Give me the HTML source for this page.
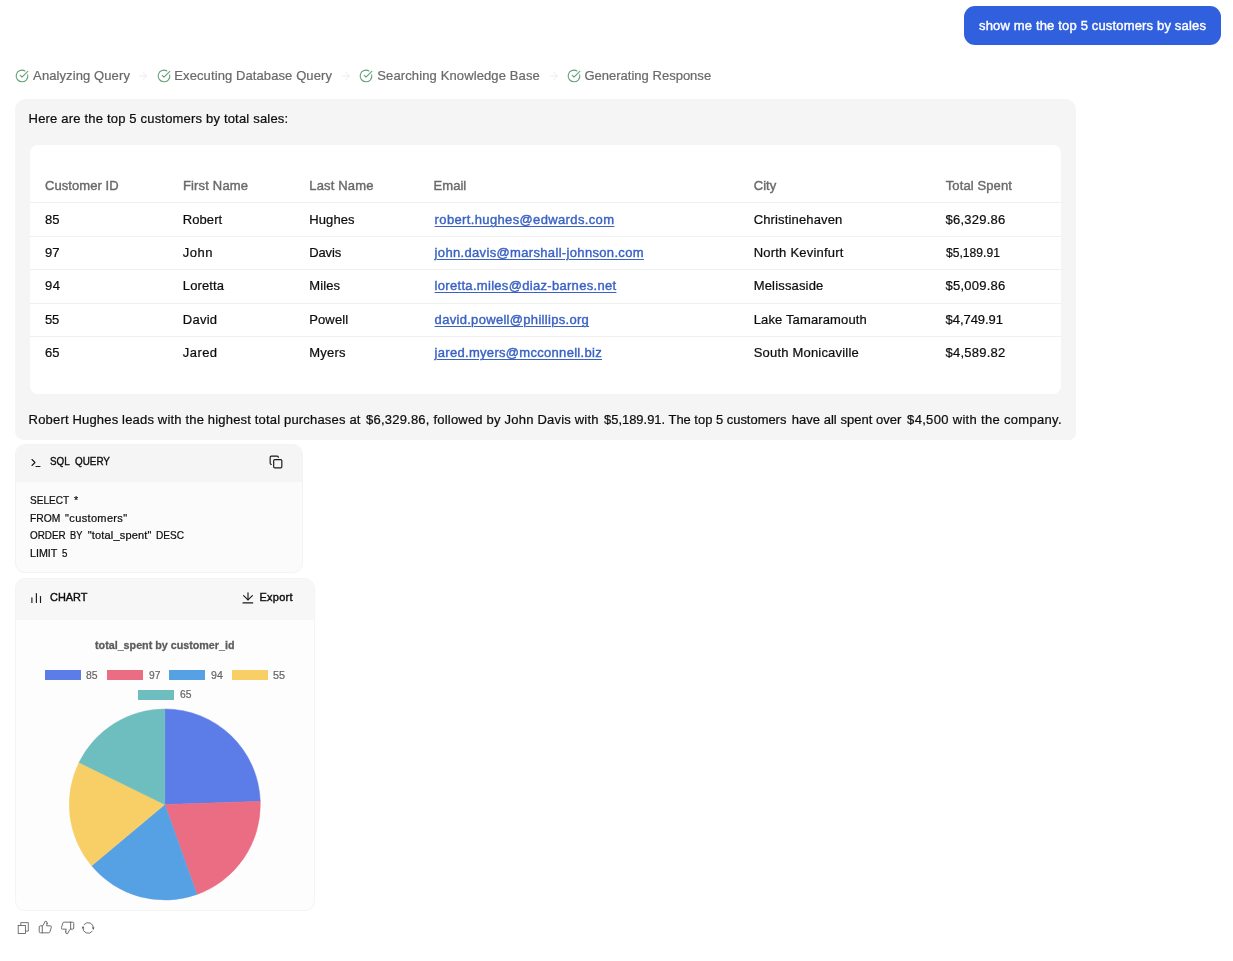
<!DOCTYPE html>
<html lang="en"><head><meta charset="utf-8"><title>Chat</title>
<style>
html,body{margin:0;padding:0;background:#fff;}
body{width:1233px;height:961px;overflow:hidden;font-family:"Liberation Sans",sans-serif;}
#page{position:relative;width:1233px;height:961px;overflow:hidden;background:#fff;}
.t{position:absolute;white-space:nowrap;margin:0;padding:0;}
.b{position:absolute;box-sizing:border-box;}
svg{position:absolute;overflow:visible;}
.ln{position:absolute;left:30px;width:1031px;height:1px;background:#f0f0f0;}
.lg{position:absolute;width:36px;height:10.4px;}
#txt{position:absolute;left:0;top:0;width:1233px;height:961px;will-change:transform;}

</style></head><body>
<div id="page">

<div class="b" style="left:964px;top:6px;width:257px;height:39px;background:#3060dd;border-radius:11px;"></div>
<svg style="left:15px;top:69.4px" width="14" height="14" viewBox="0 0 24 24" fill="none" stroke="#62a077" stroke-width="1.85" stroke-linecap="round" stroke-linejoin="round"><path d="M21.801 10A10 10 0 1 1 17 3.335"/><path d="m9 11 3 3L22 4"/></svg><svg style="left:137px;top:70.4px" width="12" height="12" viewBox="0 0 24 24" fill="none" stroke="#ededed" stroke-width="2" stroke-linecap="round" stroke-linejoin="round"><path d="M5 12h14"/><path d="m12 5 7 7-7 7"/></svg><svg style="left:157.3px;top:69.4px" width="14" height="14" viewBox="0 0 24 24" fill="none" stroke="#62a077" stroke-width="1.85" stroke-linecap="round" stroke-linejoin="round"><path d="M21.801 10A10 10 0 1 1 17 3.335"/><path d="m9 11 3 3L22 4"/></svg><svg style="left:339.5px;top:70.4px" width="12" height="12" viewBox="0 0 24 24" fill="none" stroke="#ededed" stroke-width="2" stroke-linecap="round" stroke-linejoin="round"><path d="M5 12h14"/><path d="m12 5 7 7-7 7"/></svg><svg style="left:358.9px;top:69.4px" width="14" height="14" viewBox="0 0 24 24" fill="none" stroke="#62a077" stroke-width="1.85" stroke-linecap="round" stroke-linejoin="round"><path d="M21.801 10A10 10 0 1 1 17 3.335"/><path d="m9 11 3 3L22 4"/></svg><svg style="left:547.7px;top:70.4px" width="12" height="12" viewBox="0 0 24 24" fill="none" stroke="#ededed" stroke-width="2" stroke-linecap="round" stroke-linejoin="round"><path d="M5 12h14"/><path d="m12 5 7 7-7 7"/></svg><svg style="left:566.6px;top:69.4px" width="14" height="14" viewBox="0 0 24 24" fill="none" stroke="#62a077" stroke-width="1.85" stroke-linecap="round" stroke-linejoin="round"><path d="M21.801 10A10 10 0 1 1 17 3.335"/><path d="m9 11 3 3L22 4"/></svg>
<div class="b" style="left:15px;top:99px;width:1061px;height:341px;background:#f5f5f5;border-radius:11px 11px 7px 9px;"></div>
<div class="b" style="left:30px;top:145px;width:1031px;height:249px;background:#ffffff;border-radius:8px;"></div>
<div class="ln" style="top:202px"></div>
<div class="ln" style="top:236px"></div>
<div class="ln" style="top:269px"></div>
<div class="ln" style="top:303px"></div>
<div class="ln" style="top:336px"></div>

<div class="b" style="left:15px;top:444px;width:288px;height:129px;background:#fbfbfb;border-radius:10px;border:1px solid #f3f3f3;overflow:hidden;"><div style="height:36.5px;background:#f5f5f5;"></div></div>
<svg style="left:30.2px;top:457px" width="12" height="12" viewBox="0 0 24 24" fill="none" stroke="#1a1a1a" stroke-width="2.2" stroke-linecap="round" stroke-linejoin="round"><path d="m4 17 6-6-6-6"/><path d="M12 19h8"/></svg>
<svg style="left:269px;top:455px" width="14" height="14" viewBox="0 0 24 24" fill="none" stroke="#1a1a1a" stroke-width="2" stroke-linecap="round" stroke-linejoin="round"><rect x="8" y="8" width="14" height="14" rx="2" ry="2"/><path d="M4 16c-1.1 0-2-.9-2-2V4c0-1.100.9-2 2-2h10c1.100 0 2 .9 2 2"/></svg>

<div class="b" style="left:15px;top:578px;width:300px;height:333px;background:#fdfdfd;border-radius:10px;border:1px solid #f4f4f4;overflow:hidden;"><div style="height:40.5px;background:#f7f7f7;"></div></div>

<div class="lg" style="left:44.6px;top:670px;background:#5c7ce8"></div>
<div class="lg" style="left:107.1px;top:670px;background:#eb6d83"></div>
<div class="lg" style="left:169.4px;top:670px;background:#56a0e4"></div>
<div class="lg" style="left:231.9px;top:670px;background:#f7cf66"></div>
<div class="lg" style="left:138.2px;top:689.7px;background:#6ebec0"></div>
<svg style="left:0;top:0" width="1233" height="961" viewBox="0 0 1233 961">
<path d="M164.8 804.5 L164.80 709.00 A95.5 95.5 0 0 1 260.25 801.31 Z" fill="#5c7ce8" stroke="#5c7ce8" stroke-width="0.5" stroke-linejoin="round"/>
<path d="M164.8 804.5 L260.25 801.31 A95.5 95.5 0 0 1 196.98 894.42 Z" fill="#eb6d83" stroke="#eb6d83" stroke-width="0.5" stroke-linejoin="round"/>
<path d="M164.8 804.5 L196.98 894.42 A95.5 95.5 0 0 1 91.61 865.85 Z" fill="#56a0e4" stroke="#56a0e4" stroke-width="0.5" stroke-linejoin="round"/>
<path d="M164.8 804.5 L91.61 865.85 A95.5 95.5 0 0 1 79.06 762.44 Z" fill="#f7cf66" stroke="#f7cf66" stroke-width="0.5" stroke-linejoin="round"/>
<path d="M164.8 804.5 L79.06 762.44 A95.5 95.5 0 0 1 164.80 709.00 Z" fill="#6ebec0" stroke="#6ebec0" stroke-width="0.5" stroke-linejoin="round"/>
<g fill="none" stroke="#1a1a1a" stroke-width="1.15" stroke-linecap="round" stroke-linejoin="round">
<path d="M31.900 597.900V602.400"/><path d="M36.400 593.500V602.400"/><path d="M40.500 596.500V602.400"/>
<path d="M248 592.800V599.700"/><path d="M243.600 595.700L248 599.900L252.400 595.700"/><path d="M243 602.900H252.700"/>
</g>
<g fill="none" stroke="#5f5f5f" stroke-width="0.85" stroke-linejoin="miter">
<rect x="18.200" y="925.500" width="7.200" height="8"/>
<path d="M20.800 925.300V922.600H28.300V931.100H25.600"/>
</g>
<path d="M84.09 924.54 A5.3 5.3 0 0 1 93.43 928.41" fill="none" stroke="#5f5f5f" stroke-width="0.9" stroke-linecap="round"/>
<path d="M93.28 930.11 L94.60 927.61 L91.91 927.38 Z" fill="#5f5f5f" stroke="none"/>
<path d="M92.21 931.36 A5.3 5.3 0 0 1 82.87 927.49" fill="none" stroke="#5f5f5f" stroke-width="0.9" stroke-linecap="round"/>
<path d="M83.02 925.79 L81.70 928.29 L84.39 928.52 Z" fill="#5f5f5f" stroke="none"/>
</svg>

<svg style="left:38.2px;top:920px" width="14.700" height="14" preserveAspectRatio="none" viewBox="0 0 24 24" fill="none" stroke="#5f5f5f" stroke-width="1.500" stroke-linecap="round" stroke-linejoin="round"><path d="M7 10v12"/><path d="M15 5.880 14 10h5.830a2 2 0 0 1 1.920 2.560l-2.330 8A2 2 0 0 1 17.500 22H4a2 2 0 0 1-2-2v-8a2 2 0 0 1 2-2h2.760a2 2 0 0 0 1.790-1.110L12 2a3.130 3.130 0 0 1 3 3.880Z"/></svg>
<svg style="left:59.700px;top:921.400px" width="15" height="14" preserveAspectRatio="none" viewBox="0 0 24 24" fill="none" stroke="#5f5f5f" stroke-width="1.500" stroke-linecap="round" stroke-linejoin="round"><path d="M17 14V2"/><path d="M9 18.120 10 14H4.170a2 2 0 0 1-1.920-2.560l2.330-8A2 2 0 0 1 6.500 2H20a2 2 0 0 1 2 2v8a2 2 0 0 1-2 2h-2.760a2 2 0 0 0-1.790 1.110L12 22a3.130 3.130 0 0 1-3-3.880Z"/></svg>

<div id="txt">
<div class="t" id="t0" style="left:979.00px;top:15.00px;font-size:13px;line-height:21px;font-weight:500;color:#ffffff;letter-spacing:0.165px;-webkit-text-stroke:0.4px currentColor;">show me the top 5 customers by sales</div>
<div class="t" id="t1" style="left:33.11px;top:65.00px;font-size:13px;line-height:21px;font-weight:400;color:#6a6a6a;letter-spacing:0.099px;-webkit-text-stroke:0.22px currentColor;">Analyzing Query</div>
<div class="t" id="t2" style="left:174.31px;top:65.00px;font-size:13px;line-height:21px;font-weight:400;color:#6a6a6a;letter-spacing:0.100px;-webkit-text-stroke:0.22px currentColor;">Executing Database Query</div>
<div class="t" id="t3" style="left:377.31px;top:65.00px;font-size:13px;line-height:21px;font-weight:400;color:#6a6a6a;letter-spacing:0.121px;-webkit-text-stroke:0.22px currentColor;">Searching Knowledge Base</div>
<div class="t" id="t4" style="left:584.41px;top:65.00px;font-size:13px;line-height:21px;font-weight:400;color:#6a6a6a;letter-spacing:0.013px;-webkit-text-stroke:0.22px currentColor;">Generating Response</div>
<div class="t" id="t5" style="left:28.61px;top:108.00px;font-size:13px;line-height:21px;font-weight:400;color:#0d0d0d;letter-spacing:0.187px;-webkit-text-stroke:0.22px currentColor;">Here are the top 5 customers by total sales:</div>
<div class="t" id="t6" style="left:45.00px;top:175.00px;font-size:13px;line-height:21px;font-weight:500;color:#6a6a6a;letter-spacing:0.072px;-webkit-text-stroke:0.4px currentColor;">Customer ID</div>
<div class="t" id="t7" style="left:182.90px;top:175.00px;font-size:13px;line-height:21px;font-weight:500;color:#6a6a6a;letter-spacing:0.174px;-webkit-text-stroke:0.4px currentColor;">First Name</div>
<div class="t" id="t8" style="left:309.30px;top:175.00px;font-size:13px;line-height:21px;font-weight:500;color:#6a6a6a;letter-spacing:0.157px;-webkit-text-stroke:0.4px currentColor;">Last Name</div>
<div class="t" id="t9" style="left:433.60px;top:175.00px;font-size:13px;line-height:21px;font-weight:500;color:#6a6a6a;letter-spacing:0.018px;-webkit-text-stroke:0.4px currentColor;">Email</div>
<div class="t" id="t10" style="left:753.80px;top:175.00px;font-size:13px;line-height:21px;font-weight:500;color:#6a6a6a;letter-spacing:0.003px;-webkit-text-stroke:0.4px currentColor;">City</div>
<div class="t" id="t11" style="left:945.70px;top:175.00px;font-size:13px;line-height:21px;font-weight:500;color:#6a6a6a;letter-spacing:0.116px;-webkit-text-stroke:0.4px currentColor;">Total Spent</div>
<div class="t" id="t12" style="left:44.91px;top:209.00px;font-size:13px;line-height:21px;font-weight:400;color:#0d0d0d;letter-spacing:0.141px;-webkit-text-stroke:0.22px currentColor;">85</div>
<div class="t" id="t13" style="left:182.81px;top:209.00px;font-size:13px;line-height:21px;font-weight:400;color:#0d0d0d;letter-spacing:0.072px;-webkit-text-stroke:0.22px currentColor;">Robert</div>
<div class="t" id="t14" style="left:309.21px;top:209.00px;font-size:13px;line-height:21px;font-weight:400;color:#0d0d0d;letter-spacing:0.113px;-webkit-text-stroke:0.22px currentColor;">Hughes</div>
<div class="t" id="t15" style="left:434.60px;top:209.00px;font-size:13px;line-height:21px;font-weight:500;color:#3a62c4;letter-spacing:0.362px;text-decoration:underline;text-underline-offset:2px;text-decoration-thickness:1px;-webkit-text-stroke:0.4px currentColor;">robert.hughes@edwards.com</div>
<div class="t" id="t16" style="left:753.71px;top:209.00px;font-size:13px;line-height:21px;font-weight:400;color:#0d0d0d;letter-spacing:0.145px;-webkit-text-stroke:0.22px currentColor;">Christinehaven</div>
<div class="t" id="t17" style="left:945.61px;top:209.00px;font-size:13px;line-height:21px;font-weight:400;color:#0d0d0d;letter-spacing:0.221px;-webkit-text-stroke:0.22px currentColor;">$6,329.86</div>
<div class="t" id="t18" style="left:44.91px;top:242.00px;font-size:13px;line-height:21px;font-weight:400;color:#0d0d0d;letter-spacing:0.141px;-webkit-text-stroke:0.22px currentColor;">97</div>
<div class="t" id="t19" style="left:182.81px;top:242.00px;font-size:13px;line-height:21px;font-weight:400;color:#0d0d0d;letter-spacing:0.536px;-webkit-text-stroke:0.22px currentColor;">John</div>
<div class="t" id="t20" style="left:309.21px;top:242.00px;font-size:13px;line-height:21px;font-weight:400;color:#0d0d0d;letter-spacing:-0.109px;-webkit-text-stroke:0.22px currentColor;">Davis</div>
<div class="t" id="t21" style="left:434.60px;top:242.00px;font-size:13px;line-height:21px;font-weight:500;color:#3a62c4;letter-spacing:0.337px;text-decoration:underline;text-underline-offset:2px;text-decoration-thickness:1px;-webkit-text-stroke:0.4px currentColor;">john.davis@marshall-johnson.com</div>
<div class="t" id="t22" style="left:753.71px;top:242.00px;font-size:13px;line-height:21px;font-weight:400;color:#0d0d0d;letter-spacing:0.213px;-webkit-text-stroke:0.22px currentColor;">North Kevinfurt</div>
<div class="t" id="t23" style="left:945.61px;top:242.00px;font-size:13px;line-height:21px;font-weight:400;color:#0d0d0d;letter-spacing:0.000px;transform:scaleX(0.9319);transform-origin:0 0;-webkit-text-stroke:0.22px currentColor;">$5,189.91</div>
<div class="t" id="t24" style="left:44.91px;top:275.00px;font-size:13px;line-height:21px;font-weight:400;color:#0d0d0d;letter-spacing:0.541px;-webkit-text-stroke:0.22px currentColor;">94</div>
<div class="t" id="t25" style="left:182.81px;top:275.00px;font-size:13px;line-height:21px;font-weight:400;color:#0d0d0d;letter-spacing:0.104px;-webkit-text-stroke:0.22px currentColor;">Loretta</div>
<div class="t" id="t26" style="left:309.21px;top:275.00px;font-size:13px;line-height:21px;font-weight:400;color:#0d0d0d;letter-spacing:0.109px;-webkit-text-stroke:0.22px currentColor;">Miles</div>
<div class="t" id="t27" style="left:434.60px;top:275.00px;font-size:13px;line-height:21px;font-weight:500;color:#3a62c4;letter-spacing:0.308px;text-decoration:underline;text-underline-offset:2px;text-decoration-thickness:1px;-webkit-text-stroke:0.4px currentColor;">loretta.miles@diaz-barnes.net</div>
<div class="t" id="t28" style="left:753.71px;top:275.00px;font-size:13px;line-height:21px;font-weight:400;color:#0d0d0d;letter-spacing:0.169px;-webkit-text-stroke:0.22px currentColor;">Melissaside</div>
<div class="t" id="t29" style="left:945.61px;top:275.00px;font-size:13px;line-height:21px;font-weight:400;color:#0d0d0d;letter-spacing:0.221px;-webkit-text-stroke:0.22px currentColor;">$5,009.86</div>
<div class="t" id="t30" style="left:44.91px;top:309.00px;font-size:13px;line-height:21px;font-weight:400;color:#0d0d0d;letter-spacing:-0.059px;-webkit-text-stroke:0.22px currentColor;">55</div>
<div class="t" id="t31" style="left:182.81px;top:309.00px;font-size:13px;line-height:21px;font-weight:400;color:#0d0d0d;letter-spacing:0.265px;-webkit-text-stroke:0.22px currentColor;">David</div>
<div class="t" id="t32" style="left:309.21px;top:309.00px;font-size:13px;line-height:21px;font-weight:400;color:#0d0d0d;letter-spacing:0.134px;-webkit-text-stroke:0.22px currentColor;">Powell</div>
<div class="t" id="t33" style="left:434.60px;top:309.00px;font-size:13px;line-height:21px;font-weight:500;color:#3a62c4;letter-spacing:0.306px;text-decoration:underline;text-underline-offset:2px;text-decoration-thickness:1px;-webkit-text-stroke:0.4px currentColor;">david.powell@phillips.org</div>
<div class="t" id="t34" style="left:753.71px;top:309.00px;font-size:13px;line-height:21px;font-weight:400;color:#0d0d0d;letter-spacing:0.131px;-webkit-text-stroke:0.22px currentColor;">Lake Tamaramouth</div>
<div class="t" id="t35" style="left:945.61px;top:309.00px;font-size:13px;line-height:21px;font-weight:400;color:#0d0d0d;letter-spacing:-0.067px;-webkit-text-stroke:0.22px currentColor;">$4,749.91</div>
<div class="t" id="t36" style="left:44.91px;top:342.00px;font-size:13px;line-height:21px;font-weight:400;color:#0d0d0d;letter-spacing:0.141px;-webkit-text-stroke:0.22px currentColor;">65</div>
<div class="t" id="t37" style="left:182.81px;top:342.00px;font-size:13px;line-height:21px;font-weight:400;color:#0d0d0d;letter-spacing:0.445px;-webkit-text-stroke:0.22px currentColor;">Jared</div>
<div class="t" id="t38" style="left:309.21px;top:342.00px;font-size:13px;line-height:21px;font-weight:400;color:#0d0d0d;letter-spacing:0.222px;-webkit-text-stroke:0.22px currentColor;">Myers</div>
<div class="t" id="t39" style="left:434.60px;top:342.00px;font-size:13px;line-height:21px;font-weight:500;color:#3a62c4;letter-spacing:0.302px;text-decoration:underline;text-underline-offset:2px;text-decoration-thickness:1px;-webkit-text-stroke:0.4px currentColor;">jared.myers@mcconnell.biz</div>
<div class="t" id="t40" style="left:753.71px;top:342.00px;font-size:13px;line-height:21px;font-weight:400;color:#0d0d0d;letter-spacing:0.195px;-webkit-text-stroke:0.22px currentColor;">South Monicaville</div>
<div class="t" id="t41" style="left:945.61px;top:342.00px;font-size:13px;line-height:21px;font-weight:400;color:#0d0d0d;letter-spacing:0.221px;-webkit-text-stroke:0.22px currentColor;">$4,589.82</div>
<div class="t" id="t42" style="left:28.61px;top:409.00px;font-size:13px;line-height:21px;font-weight:400;color:#0d0d0d;letter-spacing:0.176px;-webkit-text-stroke:0.22px currentColor;">Robert Hughes leads with the highest total purchases at</div>
<div class="t" id="t43" style="left:366.11px;top:409.00px;font-size:13px;line-height:21px;font-weight:400;color:#0d0d0d;letter-spacing:0.207px;-webkit-text-stroke:0.22px currentColor;">$6,329.86, followed by John Davis with</div>
<div class="t" id="t44" style="left:603.61px;top:409.00px;font-size:13px;line-height:21px;font-weight:400;color:#0d0d0d;letter-spacing:0.000px;transform:scaleX(0.9948);transform-origin:0 0;-webkit-text-stroke:0.22px currentColor;">$5,189.91. The top 5 customers</div>
<div class="t" id="t45" style="left:791.81px;top:409.00px;font-size:13px;line-height:21px;font-weight:400;color:#0d0d0d;letter-spacing:0.021px;-webkit-text-stroke:0.22px currentColor;">have all spent over</div>
<div class="t" id="t46" style="left:907.11px;top:409.00px;font-size:13px;line-height:21px;font-weight:400;color:#0d0d0d;letter-spacing:0.313px;-webkit-text-stroke:0.22px currentColor;">$4,500 with the company.</div>
<div class="t" id="t47" style="left:50.38px;top:453.00px;font-size:11px;line-height:16px;font-weight:500;color:#0d0d0d;letter-spacing:0.000px;transform:scaleX(0.8925);transform-origin:0 0;-webkit-text-stroke:0.4px currentColor;">SQL</div>
<div class="t" id="t48" style="left:74.68px;top:453.00px;font-size:11px;line-height:16px;font-weight:500;color:#0d0d0d;letter-spacing:0.000px;transform:scaleX(0.8978);transform-origin:0 0;-webkit-text-stroke:0.4px currentColor;">QUERY</div>
<div class="t" id="t49" style="left:30.30px;top:492.00px;font-size:11px;line-height:16px;font-weight:400;color:#0d0d0d;letter-spacing:0.000px;transform:scaleX(0.9146);transform-origin:0 0;-webkit-text-stroke:0.22px currentColor;">SELECT</div>
<div class="t" id="t50" style="left:74.01px;top:492.00px;font-size:11px;line-height:16px;font-weight:400;color:#0d0d0d;letter-spacing:0.000px;transform:scaleX(0.9769);transform-origin:0 0;-webkit-text-stroke:0.22px currentColor;">*</div>
<div class="t" id="t51" style="left:30.30px;top:510.00px;font-size:11px;line-height:16px;font-weight:400;color:#0d0d0d;letter-spacing:0.000px;transform:scaleX(0.9369);transform-origin:0 0;-webkit-text-stroke:0.22px currentColor;">FROM</div>
<div class="t" id="t52" style="left:65.11px;top:510.00px;font-size:11px;line-height:16px;font-weight:400;color:#0d0d0d;letter-spacing:0.344px;-webkit-text-stroke:0.22px currentColor;">"customers"</div>
<div class="t" id="t53" style="left:30.30px;top:527.00px;font-size:11px;line-height:16px;font-weight:400;color:#0d0d0d;letter-spacing:0.000px;transform:scaleX(0.8973);transform-origin:0 0;-webkit-text-stroke:0.22px currentColor;">ORDER</div>
<div class="t" id="t54" style="left:69.89px;top:527.00px;font-size:11px;line-height:16px;font-weight:400;color:#0d0d0d;letter-spacing:0.000px;transform:scaleX(0.8413);transform-origin:0 0;-webkit-text-stroke:0.22px currentColor;">BY</div>
<div class="t" id="t55" style="left:87.81px;top:527.00px;font-size:11px;line-height:16px;font-weight:400;color:#0d0d0d;letter-spacing:0.162px;-webkit-text-stroke:0.22px currentColor;">"total_spent"</div>
<div class="t" id="t56" style="left:155.80px;top:527.00px;font-size:11px;line-height:16px;font-weight:400;color:#0d0d0d;letter-spacing:0.000px;transform:scaleX(0.9177);transform-origin:0 0;-webkit-text-stroke:0.22px currentColor;">DESC</div>
<div class="t" id="t57" style="left:30.31px;top:545.00px;font-size:11px;line-height:16px;font-weight:400;color:#0d0d0d;letter-spacing:0.000px;transform:scaleX(0.9746);transform-origin:0 0;-webkit-text-stroke:0.22px currentColor;">LIMIT</div>
<div class="t" id="t58" style="left:62.10px;top:545.00px;font-size:11px;line-height:16px;font-weight:400;color:#0d0d0d;letter-spacing:0.000px;transform:scaleX(0.8832);transform-origin:0 0;-webkit-text-stroke:0.22px currentColor;">5</div>
<div class="t" id="t59" style="left:50.10px;top:589.00px;font-size:11px;line-height:16px;font-weight:500;color:#0d0d0d;letter-spacing:0.000px;transform:scaleX(0.9926);transform-origin:0 0;-webkit-text-stroke:0.4px currentColor;">CHART</div>
<div class="t" id="t60" style="left:259.50px;top:589.00px;font-size:11px;line-height:16px;font-weight:500;color:#0d0d0d;letter-spacing:0.232px;-webkit-text-stroke:0.4px currentColor;">Export</div>
<div class="t" id="t61" style="left:95.45px;top:637.00px;font-size:11px;line-height:16px;font-weight:700;color:#5c5c5c;letter-spacing:0.000px;transform:scaleX(0.9753);transform-origin:0 0;-webkit-text-stroke:0.3px currentColor;">total_spent by customer_id</div>
<div class="t" id="t62" style="left:86.30px;top:667.00px;font-size:11px;line-height:16px;font-weight:400;color:#666666;letter-spacing:0.000px;transform:scaleX(0.9472);transform-origin:0 0;-webkit-text-stroke:0.22px currentColor;">85</div>
<div class="t" id="t63" style="left:148.60px;top:667.00px;font-size:11px;line-height:16px;font-weight:400;color:#666666;letter-spacing:0.000px;transform:scaleX(0.9310);transform-origin:0 0;-webkit-text-stroke:0.22px currentColor;">97</div>
<div class="t" id="t64" style="left:210.91px;top:667.00px;font-size:11px;line-height:16px;font-weight:400;color:#666666;letter-spacing:0.000px;transform:scaleX(0.9634);transform-origin:0 0;-webkit-text-stroke:0.22px currentColor;">94</div>
<div class="t" id="t65" style="left:273.21px;top:667.00px;font-size:11px;line-height:16px;font-weight:400;color:#666666;letter-spacing:0.000px;transform:scaleX(0.9877);transform-origin:0 0;-webkit-text-stroke:0.22px currentColor;">55</div>
<div class="t" id="t66" style="left:179.80px;top:686.00px;font-size:11px;line-height:16px;font-weight:400;color:#666666;letter-spacing:0.000px;transform:scaleX(0.9391);transform-origin:0 0;-webkit-text-stroke:0.22px currentColor;">65</div>
</div>
</div>
</body></html>
